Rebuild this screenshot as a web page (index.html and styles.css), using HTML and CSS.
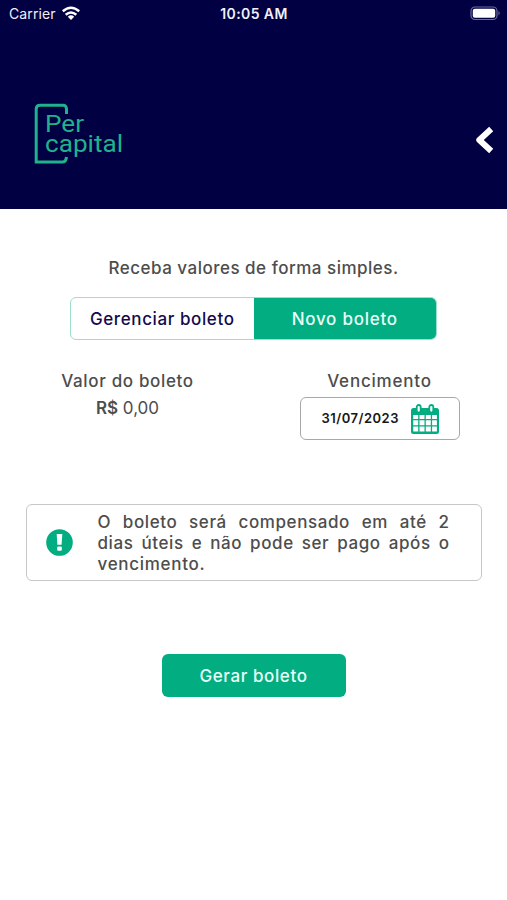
FILE: index.html
```html
<!DOCTYPE html>
<html lang="pt-BR">
<head>
<meta charset="utf-8">
<title>Per capital</title>
<link rel="stylesheet" href="styles.css">
</head>
<body>
<header class="header">
  <div class="status">
    <div class="carrier"><span class="carrier-name">Carrier</span>
      <svg class="wifi" width="20" height="15" viewBox="0 0 20 15"><g fill="none" stroke="#fff" stroke-width="2.5"><path d="M1.8 5.2Q10 -1.8 18.2 5.2"/><path d="M4.7 8.7Q10 4.2 15.3 8.7"/></g><path d="M6.8 10.7Q10 8 13.2 10.7L10 14Z" fill="#fff"/></svg>
    </div>
    <span class="clock">10:05 AM</span>
    <svg class="battery" width="31" height="15" viewBox="0 0 31 15"><rect x="1" y="1" width="26" height="12.5" rx="4" fill="none" stroke="#6b6b9c" stroke-width="1.2"/><rect x="2.8" y="2.8" width="22.4" height="9" rx="2" fill="#fff"/><path d="M28.5 5Q31 7.2 28.5 9.4Z" fill="#6b6b9c"/></svg>
  </div>
  <div class="brand-row">
    <svg class="logo" width="92" height="64" viewBox="0 0 92 64">
      <path d="M32.5 11V6Q32.5 2.2 29 2.2H6Q2.2 2.2 2.2 6V59H28.5Q32 59 32.5 54" fill="none" stroke="#20b28c" stroke-width="3"/>
      <text class="logo-text" x="11" y="28.5" textLength="39" lengthAdjust="spacingAndGlyphs">Per</text>
      <text class="logo-text" x="11" y="48.5" textLength="78" lengthAdjust="spacingAndGlyphs">capital</text>
    </svg>
    <svg class="back" width="21" height="30" viewBox="0 0 21 30"><path d="M16.2 4L4.3 15L16.2 26" fill="none" stroke="#fff" stroke-width="6" stroke-linejoin="round"/></svg>
  </div>
</header>
<main class="content">
  <p class="intro">Receba valores de forma simples.</p>
  <div class="tabs">
    <div class="tab"><span class="t-manage">Gerenciar boleto</span></div>
    <div class="tab active"><span class="t-new">Novo boleto</span></div>
  </div>
  <div class="fields">
    <div class="amount"><span class="label l-amount">Valor do boleto</span><span class="value"><b>R$</b> 0,00</span></div>
    <div class="due"><span class="label l-due">Vencimento</span>
      <div class="date-box"><span class="date">31/07/2023</span>
        <svg width="28" height="30" viewBox="0 0 28 30"><rect x="0" y="4" width="28" height="26" rx="2.5" fill="#02ad82"/><g fill="#fff"><path d="M2.2 11h5v4h-5zM8.5 11h5v4h-5zM14.8 11h5v4h-5zM21.1 11h4.8v4h-4.8zM2.2 16.3h5v5h-5zM8.5 16.3h5v5h-5zM14.8 16.3h5v5h-5zM21.1 16.3h4.8v5h-4.8zM2.2 22.6h5v5h-5zM8.5 22.6h5v5h-5zM14.8 22.6h5v5h-5zM21.1 22.6h4.8v5h-4.8z"/></g><g fill="#fff" stroke="#02ad82" stroke-width="1.8"><rect x="5.7" y="1" width="4" height="7.6" rx="2"/><rect x="18.3" y="1" width="4" height="7.6" rx="2"/></g></svg>
      </div>
    </div>
  </div>
  <div class="notice">
    <svg width="28" height="28" viewBox="0 0 28 28"><circle cx="13.5" cy="13.5" r="13.3" fill="#02ad82"/><path d="M10.7 5H16.3L15.6 15.8H11.4Z" fill="#fff"/><rect x="11.2" y="17.5" width="4.6" height="4.2" rx="1" fill="#fff"/></svg>
    <p class="notice-text"><span class="n1">O boleto será compensado em até 2</span> <span class="n2">dias úteis e não pode ser pago após o</span> <span class="n3">vencimento.</span></p>
  </div>
  <div class="submit"><span class="t-submit">Gerar boleto</span></div>
</main>
</body>
</html>
```
FILE: styles.css
```css
* { box-sizing: border-box; }
body { margin: 0; background: #fff; color: #4d4d4d; font-family: Inter, "Liberation Sans", sans-serif; font-size: 17px; font-weight: 500; white-space: nowrap; }
p { margin: 0; }
svg { display: block; flex: none; }
.header { height: 209px; background: #000042; }
.status { height: 27px; display: grid; grid-template-columns: 1fr auto 1fr; align-items: center; padding: 0 6px 0 9px; color: #f0f0f8; }
.carrier { display: flex; align-items: center; gap: 5px; font-size: 14px; font-weight: 400; letter-spacing: .1px; }
.clock { font-size: 14px; font-weight: 600; letter-spacing: .4px; margin-right: 2px; }
.battery { justify-self: end; }
.brand-row { display: flex; justify-content: space-between; padding: 76px 11px 0 34px; }
.back { margin-top: 22px; }
.logo-text { font-family: Roboto, sans-serif; font-weight: 400; font-size: 23px; fill: #20b28c; }
.content { display: flex; flex-direction: column; align-items: center; padding-top: 48px; }
.intro { line-height: 22px; letter-spacing: .5px; }
.tabs { width: 367px; height: 43px; margin-top: 18px; display: flex; border: 1px solid #9edfcb; border-radius: 6px; overflow: hidden; }
.tab { flex: 1; display: flex; align-items: center; justify-content: center; color: #12094f; }
.active { background: #02ad82; color: #e8fff7; }
.t-manage { letter-spacing: .6px; }
.t-new { letter-spacing: .75px; }
.t-submit { letter-spacing: .6px; }
.fields { width: 398px; margin-top: 30px; display: flex; justify-content: space-between; padding-left: 7px; }
.amount { width: 132px; }
.due { width: 160px; margin-right: -7px; }
.amount, .due { display: flex; flex-direction: column; align-items: center; }
.label { line-height: 22px; letter-spacing: .65px; }
.l-due { letter-spacing: .8px; }
.value { margin-top: 5px; line-height: 22px; font-weight: 400; }
.value b { font-weight: 600; }
.date-box { width: 160px; height: 43px; margin-top: 5px; border: 1px solid #a8a8a8; border-radius: 6px; display: flex; align-items: center; padding: 0 20px 0 21px; justify-content: space-between; }
.date { color: #161616; font-size: 13px; font-weight: 600; letter-spacing: .5px; padding-bottom: 1px; }
.notice { width: 456px; height: 77px; margin-top: 64px; border: 1px solid #c7c7c7; border-radius: 6px; display: flex; align-items: center; padding: 0 31px 0 19px; gap: 24px; }
.notice-text { flex: 1; line-height: 21px; white-space: normal; padding-top: 2px; }
.notice-text span { display: block; text-align: justify; text-align-last: justify; letter-spacing: .6px; }
.notice-text .n3 { text-align-last: left; letter-spacing: .7px; }
.submit { width: 184px; height: 43px; margin-top: 73px; border-radius: 6px; background: #02ad82; color: #e8fff7; display: flex; align-items: center; justify-content: center; }
```
